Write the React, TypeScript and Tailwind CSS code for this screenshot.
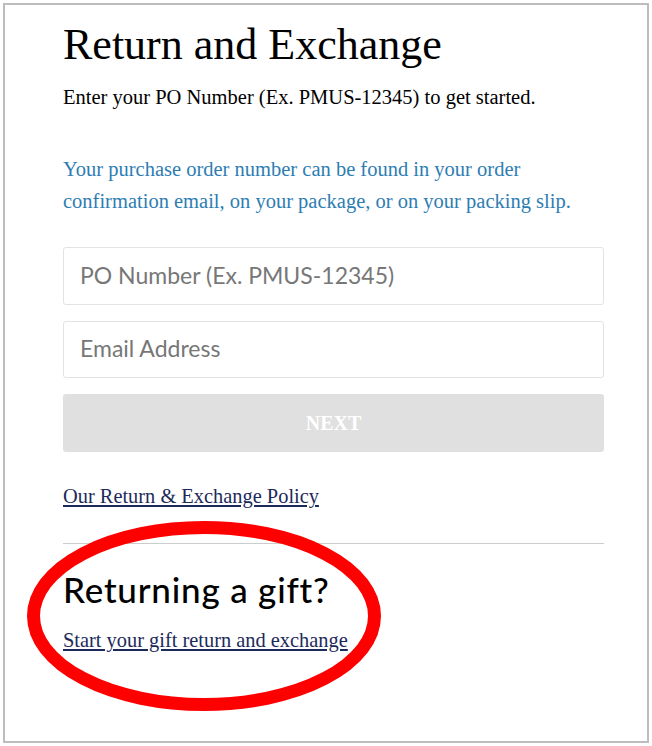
export default function App() {
  return (
    <div className="min-h-screen bg-white p-[3px]">
      <div className="relative h-[740px] border-2 border-[#bdbdbd] bg-white">
        <div className="flex flex-col items-start pl-[58px] pr-[43px] pt-[14px] font-['Liberation_Serif',serif]">
          <h1 className="text-[44px] leading-[52px] text-black">Return and Exchange</h1>
          <p className="mt-[14px] text-[20.5px] leading-[24px] text-black">
            Enter your PO Number (Ex. PMUS-12345) to get started.
          </p>
          <p className="mt-[44px] text-[20.5px] leading-[32px] text-[#2d7db3]">
            Your purchase order number can be found in your order
            <br />
            confirmation email, on your package, or on your packing slip.
          </p>

          <div className="mt-[30px] flex w-full flex-col gap-[16px]">
            <input
              placeholder="PO Number (Ex. PMUS-12345)"
              className="h-[58px] rounded-[3px] border border-[#e3e3e3] px-[16px] pb-[3px] font-['Lato',sans-serif] text-[23px] placeholder:text-[#777777]"
            />
            <input
              placeholder="Email Address"
              className="h-[57px] rounded-[3px] border border-[#e3e3e3] px-[16px] pb-[3px] font-['Lato',sans-serif] text-[23px] placeholder:text-[#777777]"
            />
            <button className="h-[58px] rounded-[3px] bg-[#e0e0e0] text-[20px] font-bold text-white">
              NEXT
            </button>
          </div>

          <a href="#" className="mt-[32px] text-[20.4px] leading-[24px] text-[#1c2a5b] underline">
            Our Return &amp; Exchange Policy
          </a>

          <hr className="mt-[35px] w-full border-[#cccccc]" />

          <h2 className="mt-[25px] font-['Lato',sans-serif] text-[35px] font-medium leading-[40px] tracking-[0.8px] text-black">
            Returning a gift?
          </h2>
          <a href="#" className="mt-[19px] text-[20.4px] leading-[24px] text-[#1c2a5b] underline">
            Start your gift return and exchange
          </a>
        </div>

        {/* red annotation circle */}
        <svg className="pointer-events-none absolute left-[22px] top-[516px]" width="354" height="190" viewBox="0 0 354 190">
          <ellipse cx="177" cy="95" rx="170.5" ry="88.5" fill="none" stroke="#ff0000" strokeWidth="13" />
        </svg>
      </div>
    </div>
  );
}
